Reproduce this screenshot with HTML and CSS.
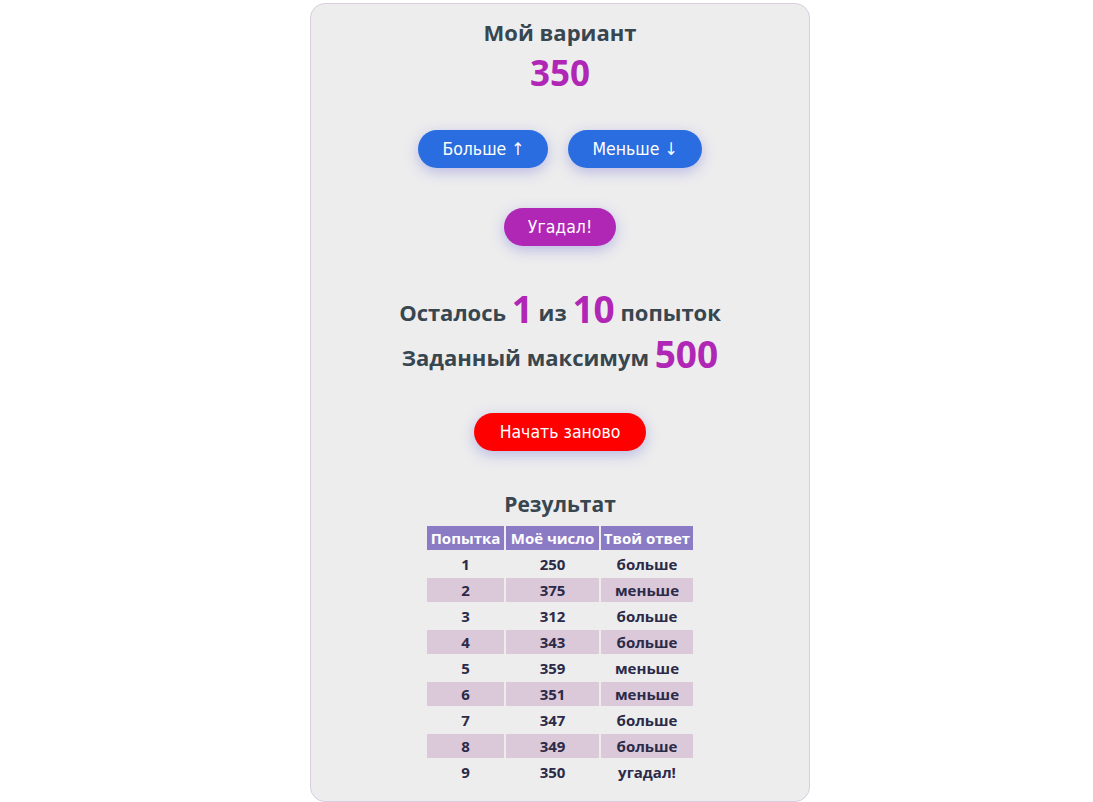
FILE: index.html
```html
<!DOCTYPE html>
<html lang="ru">
<head>
<meta charset="utf-8">
<title>Угадай число</title>
<link rel="stylesheet" href="styles.css">
</head>
<body>
<div class="card">
  <h1 class="title title-main">Мой вариант</h1>
  <div class="guess">350</div>
  <div class="btn-row">
    <button class="btn btn-blue">Больше ↑</button>
    <button class="btn btn-blue">Меньше ↓</button>
  </div>
  <div class="btn-row btn-row-mid">
    <button class="btn btn-purple">Угадал!</button>
  </div>
  <p class="info info-first">Осталось <span class="num">1</span> из <span class="num">10</span> попыток</p>
  <p class="info">Заданный максимум <span class="num">500</span></p>
  <div class="btn-row btn-row-restart">
    <button class="btn btn-red btn-wide">Начать заново</button>
  </div>
  <h2 class="title result-title">Результат</h2>
  <table class="results">
    <thead>
      <tr><th>Попытка</th><th>Моё число</th><th>Твой ответ</th></tr>
    </thead>
    <tbody>
      <tr><td>1</td><td>250</td><td>больше</td></tr>
      <tr><td>2</td><td>375</td><td>меньше</td></tr>
      <tr><td>3</td><td>312</td><td>больше</td></tr>
      <tr><td>4</td><td>343</td><td>больше</td></tr>
      <tr><td>5</td><td>359</td><td>меньше</td></tr>
      <tr><td>6</td><td>351</td><td>меньше</td></tr>
      <tr><td>7</td><td>347</td><td>больше</td></tr>
      <tr><td>8</td><td>349</td><td>больше</td></tr>
      <tr><td>9</td><td>350</td><td>угадал!</td></tr>
    </tbody>
  </table>
</div>
</body>
</html>
```
FILE: styles.css
```css
html, body {
  margin: 0;
  padding: 0;
  background: #ffffff;
}
body {
  font-family: "Open Sans", "Noto Sans", sans-serif;
  color: #37464f;
}
.card {
  box-sizing: border-box;
  width: 500px;
  margin: 3px 0 0 310px;
  padding: 13px 0 15px;
  border: 1px solid #d9cde0;
  border-radius: 15px;
  background: #ededee;
  text-align: center;
}
.title {
  margin: 0;
  font-size: 21px;
  line-height: 30px;
  font-weight: 700;
  color: #37464f;
}
.title-main {
  font-size: 22px;
}
.guess {
  margin-top: 4px;
  font-size: 35px;
  line-height: 44px;
  font-weight: 700;
  color: #b026b5;
}
.btn-row {
  display: flex;
  justify-content: center;
  gap: 20px;
  margin-top: 35px;
}
.btn-row-mid {
  margin-top: 40px;
}
.btn-row-restart {
  margin-top: 33px;
}
.btn {
  height: 38px;
  padding: 0 24px;
  border: none;
  border-radius: 19px;
  font-family: "DejaVu Sans Condensed", "DejaVu Sans", sans-serif;
  font-size: 17.5px;
  color: #ffffff;
  box-shadow: 0 4px 14px rgba(90, 90, 210, 0.35);
  cursor: pointer;
}
.btn-wide {
  padding: 0 26px;
}
.btn-blue { background: #2a6de0; }
.btn-purple { background: #b026b5; }
.btn-red { background: #ff0000; }
.info {
  margin: 0;
  font-size: 22px;
  line-height: 45px;
  font-weight: 700;
  color: #37464f;
}
.info-first {
  margin-top: 44px;
}
.num {
  font-size: 37px;
  line-height: 1;
  color: #b026b5;
  vertical-align: -2px;
}
.result-title {
  margin-top: 38px;
}
.results {
  margin: 5px auto 0;
  border-spacing: 2px;
  font-size: 15px;
  font-weight: 700;
  color: #2b2a48;
}
.results th {
  height: 24px;
  padding: 0 2px;
  background: #8a7bc4;
  color: #ffffff;
}
.results td {
  height: 24px;
  padding: 0 2px;
  text-align: center;
}
.results tbody tr:nth-child(even) td {
  background: #dbc8d9;
}
.results th:nth-child(1), .results td:nth-child(1) { width: 73px; }
.results th:nth-child(2), .results td:nth-child(2) { width: 89px; }
.results th:nth-child(3), .results td:nth-child(3) { width: 88px; }
```
